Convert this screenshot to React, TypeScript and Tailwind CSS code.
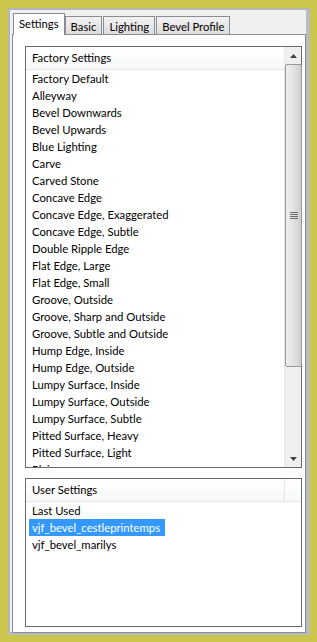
import React from "react";

const factory = [
  "Factory Default",
  "Alleyway",
  "Bevel Downwards",
  "Bevel Upwards",
  "Blue Lighting",
  "Carve",
  "Carved Stone",
  "Concave Edge",
  "Concave Edge, Exaggerated",
  "Concave Edge, Subtle",
  "Double Ripple Edge",
  "Flat Edge, Large",
  "Flat Edge, Small",
  "Groove, Outside",
  "Groove, Sharp and Outside",
  "Groove, Subtle and Outside",
  "Hump Edge, Inside",
  "Hump Edge, Outside",
  "Lumpy Surface, Inside",
  "Lumpy Surface, Outside",
  "Lumpy Surface, Subtle",
  "Pitted Surface, Heavy",
  "Pitted Surface, Light",
  "Plain",
];

const user = ["Last Used", "vjf_bevel_cestleprintemps", "vjf_bevel_marilys"];

function Tab({ label, active }: { label: string; active?: boolean }) {
  if (active) {
    return (
      <div className="relative z-10 -mr-[1px] flex h-[22px] items-center border border-b-0 border-[#898c95] bg-white px-[5px] pb-[2px]">
        {label}
      </div>
    );
  }
  return (
    <div className="ml-[1px] mt-[2px] flex h-[19px] items-center border border-b-0 border-[#898c95] bg-gradient-to-b from-[#f2f2f2] to-[#dcdcdc] px-[5px]">
      {label}
    </div>
  );
}

function Header({ label }: { label: string }) {
  return (
    <div className="flex h-[23px] shrink-0 border-b border-[#e5e5e5] bg-gradient-to-b from-white to-[#f7f8f9]">
      <div className="flex flex-1 items-center pl-[6px] pb-[2px]">{label}</div>
      <div className="w-[17px] border-l border-[#e3e5e8]" />
    </div>
  );
}

function Arrow({ up }: { up?: boolean }) {
  return (
    <div className="flex h-[17px] w-[17px] items-center justify-center">
      <svg width="7" height="4" viewBox="0 0 7 4">
        {up ? (
          <path d="M0 4 L3.5 0 L7 4 Z" fill="#404040" />
        ) : (
          <path d="M0 0 L3.5 4 L7 0 Z" fill="#404040" />
        )}
      </svg>
    </div>
  );
}

export default function App() {
  return (
    <div
      className="h-[642px] w-[317px] overflow-hidden bg-[#cdc64c] pl-[8px] pt-[8px] text-[11.3px] leading-[17px] text-black"
      style={{ fontFamily: 'Lato, "Liberation Sans", Arial, sans-serif' }}
    >
      <div className="flex h-[627px] w-[302px] flex-col border-b-[3px] border-l-[2px] border-r-[4px] border-t-[2px] border-b-[#b8bbbf] border-l-[#b3b7bd] border-r-[#b8bbbf] border-t-[#b3b7bd] bg-[#f0f0f0] pl-[2px] pt-[3px]">
        <div className="flex h-[22px] items-end pl-[1px]">
          <Tab label="Settings" active />
          <Tab label="Basic" />
          <Tab label="Lighting" />
          <Tab label="Bevel Profile" />
        </div>
        <div className="-mt-[1px] flex h-[599px] w-[294px] flex-col border border-[#898c95] bg-white pb-[5px] pl-[12px] pr-[3px] pt-[11px]">
          <div className="flex h-[422px] w-[277px] shrink-0 border border-[#6a6a6a]">
            <div className="flex min-w-0 flex-1 flex-col overflow-hidden">
              <div className="flex h-[23px] shrink-0 items-center border-b border-[#e5e5e5] bg-gradient-to-b from-white to-[#f7f8f9] pl-[6px] pb-[2px]">
                Factory Settings
              </div>
              <div>
                {factory.map((f) => (
                  <div key={f} className="h-[17px] whitespace-nowrap pl-[6px]">
                    {f}
                  </div>
                ))}
              </div>
            </div>
            <div className="flex w-[17px] flex-col bg-[#f0f0f0] border-l border-[#e8e8e8]">
              <Arrow up />
              <div className="relative flex h-[303px] w-[17px] items-center justify-center rounded-[2px] border border-[#979797] bg-gradient-to-r from-[#eeeeee] via-[#e3e3e3] to-[#cfcfcf]">
                <svg width="8" height="8" viewBox="0 0 8 8">
                  <rect x="0" y="0" width="8" height="1" fill="#6e6e6e" />
                  <rect x="0" y="2" width="8" height="1" fill="#6e6e6e" />
                  <rect x="0" y="4" width="8" height="1" fill="#6e6e6e" />
                  <rect x="0" y="6" width="8" height="1" fill="#6e6e6e" />
                </svg>
              </div>
              <div className="flex-1" />
              <Arrow />
            </div>
          </div>
          <div className="mt-[10px] flex h-[150px] w-[277px] flex-col border border-[#6a6a6a]">
            <Header label="User Settings" />
            <div>
              {user.map((u, i) => (
                <div key={u} className="flex h-[17px] pl-[3px]">
                  <div
                    className={
                      i === 1
                        ? "whitespace-nowrap bg-[#3399ff] pl-[3px] pr-[5px] text-white"
                        : "whitespace-nowrap pl-[3px]"
                    }
                  >
                    {u}
                  </div>
                </div>
              ))}
            </div>
          </div>
        </div>
      </div>
    </div>
  );
}
